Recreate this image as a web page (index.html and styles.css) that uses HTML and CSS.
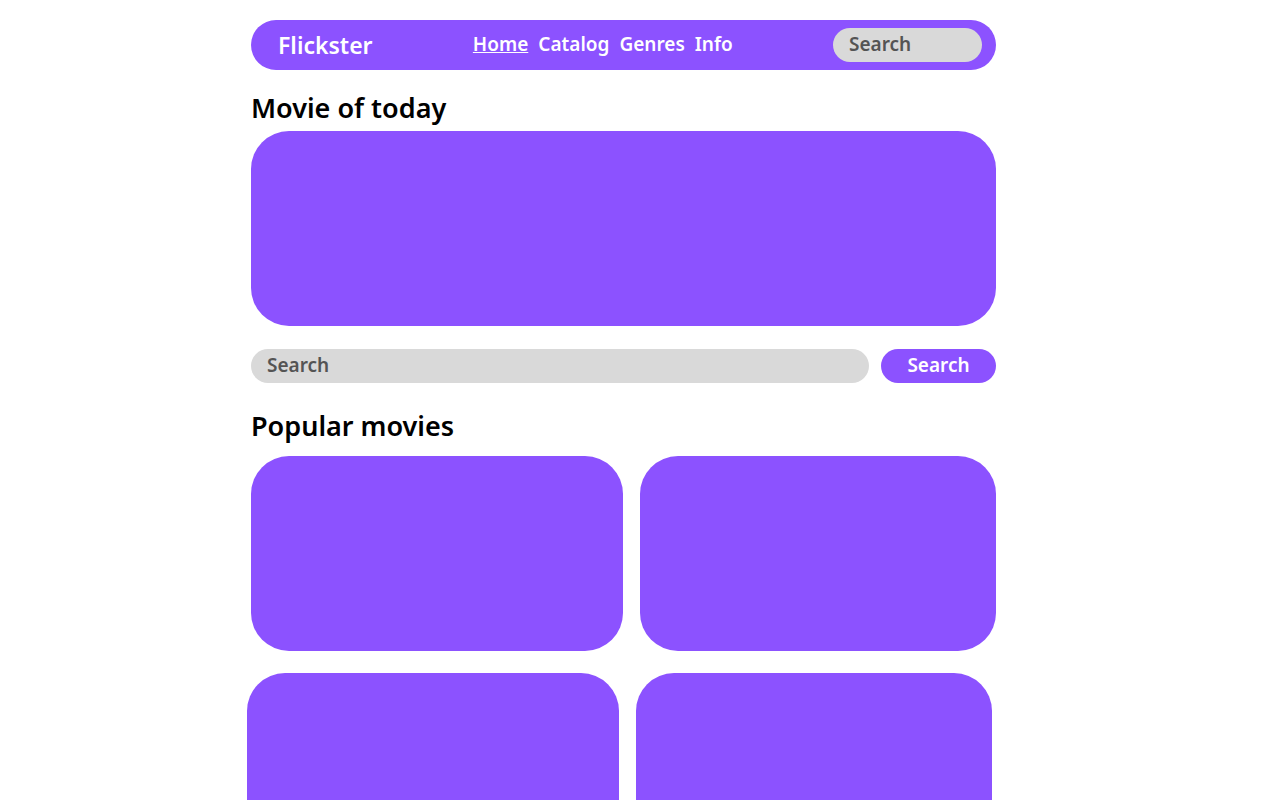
FILE: index.html
```html
<!DOCTYPE html>
<html lang="en">
<head>
<meta charset="utf-8">
<meta name="viewport" content="width=device-width, initial-scale=1">
<title>Flickster</title>
<link rel="stylesheet" href="styles.css">
</head>
<body>
<div class="page">
  <header class="topbar">
    <a class="brand" href="#">Flickster</a>
    <nav class="nav" aria-label="Main">
      <a class="nav-link nav-link-active" href="#" aria-current="page">Home</a>
      <a class="nav-link" href="#">Catalog</a>
      <a class="nav-link" href="#">Genres</a>
      <a class="nav-link" href="#">Info</a>
    </nav>
    <input class="field field-small" type="search" placeholder="Search" aria-label="Search the site">
  </header>
  <main>
    <h1 class="title">Movie of today</h1>
    <section class="card" aria-label="Movie of today"></section>
    <form class="search">
      <input class="field field-wide" type="search" placeholder="Search" aria-label="Search movies">
      <button class="button" type="submit">Search</button>
    </form>
    <h2 class="title title-popular">Popular movies</h2>
    <div class="row">
      <article class="card"></article>
      <article class="card"></article>
    </div>
    <div class="row row-shifted">
      <article class="card"></article>
      <article class="card"></article>
    </div>
  </main>
</div>
</body>
</html>
```
FILE: styles.css
```css
* {
  box-sizing: border-box;
}

body {
  margin: 0;
  padding: 20px 33px 20px 0;
  background: #fff;
  color: #000;
  font-family: "Noto Sans", "Open Sans", sans-serif;
  font-size: 19px;
  font-weight: 600;
}

.page {
  max-width: 745px;
  margin: 0 auto;
}

.topbar {
  display: flex;
  align-items: center;
  justify-content: space-between;
  min-height: 50px;
  padding: 0 14px 0 27px;
  border-radius: 25px;
  background: #8c52ff;
}

.brand {
  color: #fff;
  font-size: 23px;
  line-height: 32px;
  text-decoration: none;
}

.nav {
  display: flex;
  gap: 10px;
  padding-bottom: 2px;
}

.nav-link {
  color: #fff;
  line-height: 24px;
  text-decoration: none;
}

.nav-link-active {
  text-decoration: underline;
  text-decoration-thickness: 1px;
  text-underline-offset: 1px;
}

.field {
  height: 34px;
  min-width: 0;
  padding: 0 16px 2px;
  border: 0;
  border-radius: 17px;
  background: #d9d9d9;
  color: #545454;
  font: inherit;
  appearance: none;
}

.field::placeholder {
  color: #545454;
  opacity: 1;
}

.field-small {
  width: 149px;
}

.field-wide {
  flex: 1;
}

.title {
  margin: 18px 0 3px;
  font-size: 27px;
  font-weight: 600;
  line-height: 40px;
}

.title-popular {
  margin: 23px 0 10px;
}

.card {
  height: 195px;
  border-radius: 38px;
  background: #8c52ff;
}

.search {
  display: flex;
  gap: 12px;
  margin-top: 23px;
}

.button {
  width: 115px;
  height: 34px;
  padding: 0 0 2px;
  border: 0;
  border-radius: 17px;
  background: #8c52ff;
  color: #fff;
  font: inherit;
}

.row {
  display: grid;
  grid-template-columns: 372fr 356fr;
  gap: 17px;
}

.row-shifted {
  margin: 22px 4px 0 -4px;
}
```
